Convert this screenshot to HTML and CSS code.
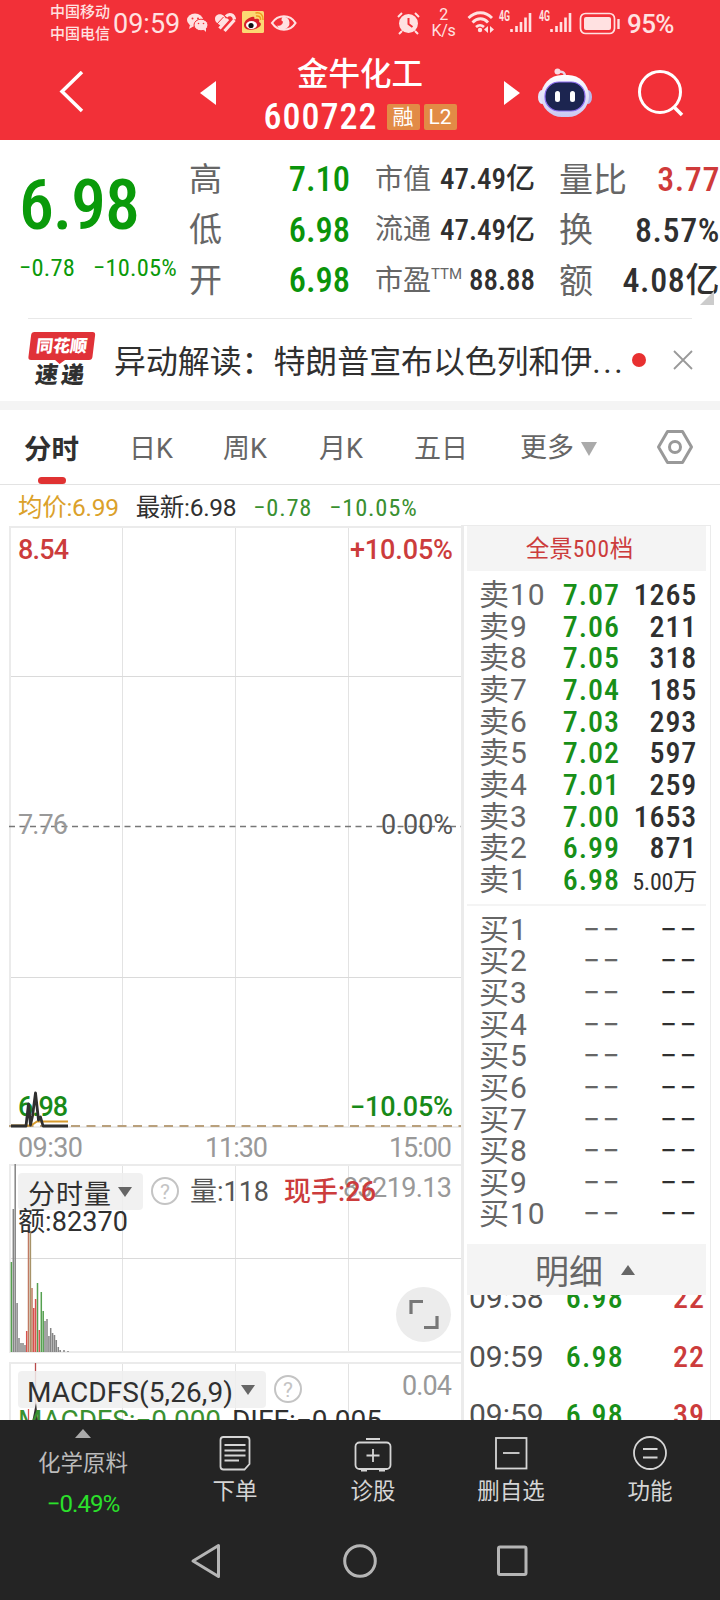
FILE: index.html
```
<!DOCTYPE html>
<html lang="zh-CN">
<head>
    <meta charset="UTF-8">
    <meta name="viewport" content="width=device-width, initial-scale=1.0">
    <title>金牛化工 600722</title>
    <link rel="stylesheet" href="styles.css">
</head>
<body>
    <header class="top">
        <div class="status">
            <div class="carrier"><span>中国移动</span><span>中国电信</span></div>
            <span class="clock">09:59</span>
            <svg class="st-left" width="112" height="26" viewBox="186 9 112 26">
                <g fill="#ffe1e1">
                    <ellipse cx="195" cy="20" rx="8" ry="6.5"/><path d="M190 25l-1 4 5-3z"/>
                    <ellipse cx="201" cy="25" rx="7" ry="5.8" stroke="#f23038" stroke-width="1"/><path d="M203 29l3 3v-4z"/>
                </g>
                <g fill="#f23038"><circle cx="192.500" cy="18.500" r="1"/><circle cx="198" cy="18.500" r="1"/><circle cx="198.500" cy="23.500" r=".8"/><circle cx="203.500" cy="23.500" r=".8"/></g>
                <path d="M215 19c0-5 6-6 9-3l3 4-6 6c-4-3-6-4-6-7z" fill="#ffe1e1"/>
                <path d="M219.500 28.500l8.500-9.500M224.500 31l10-11" fill="none" stroke="#ffe1e1" stroke-width="3.200"/>
                <path d="M226 16.500c3-3.500 8-2 8.500 3" fill="none" stroke="#ffe1e1" stroke-width="3.200"/>
                <path d="M216.500 24.500l7-7.500" stroke="#f23038" stroke-width="1"/>
                <rect x="242" y="11" width="22" height="22" rx="1.500" fill="#fcd873"/>
                <path d="M244 25c0-5 7-9 10-8 1 1 0 2 1 2 3-1 5 0 4 3 3 1 2 4 0 5-5 4-15 4-15-2z" fill="#d8202a"/>
                <ellipse cx="251.500" cy="25" rx="5.500" ry="4" fill="#fff"/><circle cx="251" cy="25.500" r="2.600" fill="#111"/>
                <path d="M256 16c3-.5 5 1 4.500 4M255.500 13c5-1 8 2 7.500 7" fill="none" stroke="#f09a20" stroke-width="1.500"/>
                <path d="M272 23c6-9 18-9 23.500 0-5.500 9-17.500 9-23.500 0z" fill="none" stroke="#ffe1e1" stroke-width="2.200"/>
                <path d="M283 16.500a6.500 6.500 0 1 1-6 9c3 1 6-1 6-4-2 0-2-3 0-5z" fill="#ffe1e1"/>
            </svg>
            <svg class="st-alarm" width="24" height="24" viewBox="397 11 24 24">
                <circle cx="408.500" cy="23.500" r="9.500" fill="#ffe1e1"/>
                <path d="M398 17l4-4M419 17l-4-4M402 31l-3 3M415 31l3 3" stroke="#ffe1e1" stroke-width="2"/>
                <path d="M408.500 18v6l4 3" fill="none" stroke="#f23038" stroke-width="2"/>
            </svg>
            <div class="speed"><span>2</span><span>K/s</span></div>
            <svg class="st-right" width="156" height="26" viewBox="466 9 156 26">
                <g fill="none" stroke="#ffe1e1" stroke-width="2.800">
                    <path d="M468.500 18c7-7 17-7 23.500 0M472.500 22.500c5-5 11-5 15.500 0M476 27c3-2.500 5-2.500 8 0"/>
                </g>
                <circle cx="480" cy="30" r="2.200" fill="#ffe1e1"/>
                <path d="M488 26v7l-4-3.500zM490 26v7l4-3.500z" fill="#ffe1e1"/>
                <text class="net" x="499" y="21" textLength="11" lengthAdjust="spacingAndGlyphs">4G</text>
                <path d="M511.500 29v3M516.500 26v6M521 22v10M525.500 17.500V32M530 13v19M551.500 29v3M556.500 26v6M561 22v10M565.500 17.500V32M570 13v19" stroke="#ffe1e1" stroke-width="2.600"/>
                <text class="net" x="539" y="21" textLength="11" lengthAdjust="spacingAndGlyphs">4G</text>
                <rect x="580.500" y="13.500" width="34" height="20" rx="5" fill="none" stroke="#ffe1e1" stroke-width="1.700"/>
                <rect x="584" y="17" width="27" height="13" rx="2" fill="#ffe1e1"/>
                <path d="M618.500 19v10" stroke="#ffe1e1" stroke-width="2.400"/>
            </svg>
            <span class="battery">95%</span>
        </div>
        <div class="titlebar">
            <svg class="back" width="26" height="44" viewBox="0 0 26 44"><path d="M23 1L3 20.500 23 40" fill="none" stroke="#fff" stroke-width="3.500"/></svg>
            <svg class="prev" width="16" height="24" viewBox="0 0 16 24"><path d="M16 0v24L0 12z" fill="#fff"/></svg>
            <div class="stock">
                <h1>金牛化工</h1>
                <div class="code"><b>600722</b><i>融</i><i>L2</i></div>
            </div>
            <svg class="next" width="16" height="24" viewBox="0 0 16 24"><path d="M0 0v24l16-12z" fill="#fff"/></svg>
            <svg class="robot" width="54" height="50" viewBox="0 0 54 50">
                <defs><linearGradient id="head" x2="0" y2="1"><stop offset="0" stop-color="#fff"/><stop offset="1" stop-color="#c9c8f2"/></linearGradient></defs>
                <path d="M27 9c0-5-3-6-7-5" fill="none" stroke="#e9d3e4" stroke-width="2.500"/><circle cx="19.500" cy="3.500" r="3" fill="#f9dbe3"/>
                <ellipse cx="4" cy="29" rx="4" ry="7" fill="#e6e4fa"/><ellipse cx="50" cy="29" rx="4" ry="7" fill="#b9b8ea"/>
                <rect x="3" y="7" width="48" height="42" rx="21" fill="url(#head)"/>
                <rect x="7" y="14" width="40" height="29" rx="14" fill="#1c2550" stroke="#8c6cf0" stroke-width="1.200"/>
                <rect x="17" y="23" width="5" height="11" rx="2.500" fill="#fff"/><rect x="32" y="23" width="5" height="11" rx="2.500" fill="#fff"/>
            </svg>
            <svg class="search" width="48" height="48" viewBox="0 0 48 48"><circle cx="23" cy="23" r="20.500" fill="none" stroke="#fff" stroke-width="3"/><path d="M37 38l8 8" stroke="#fff" stroke-width="3.500"/></svg>
        </div>
    </header>

    <section class="quote">
        <div class="last">
            <div class="price">6.98</div>
            <div class="change"><span>−0.78</span><span>−10.05%</span></div>
        </div>
        <dl class="col-a">
            <dt>高</dt><dd>7.10</dd>
            <dt>低</dt><dd>6.98</dd>
            <dt>开</dt><dd>6.98</dd>
        </dl>
        <dl class="col-b">
            <dt>市值</dt><dd>47.49<em>亿</em></dd>
            <dt>流通</dt><dd>47.49<em>亿</em></dd>
            <dt>市盈<sup>TTM</sup></dt><dd>88.88</dd>
        </dl>
        <dl class="col-c">
            <dt>量比</dt><dd class="up">3.77</dd>
            <dt>换</dt><dd>8.57%</dd>
            <dt>额</dt><dd>4.08<em>亿</em></dd>
        </dl>
        <i class="corner"></i>
    </section>

    <section class="news">
        <div class="logo"><span class="logo-top">同花顺</span><span class="logo-sub">速递</span></div>
        <p>异动解读：特朗普宣布以色列和伊<span class="dots">...</span></p>
        <i class="dot"></i>
        <svg class="close" width="20" height="20" viewBox="0 0 20 20"><path d="M1 1l18 18M19 1L1 19" stroke="#999" stroke-width="1.800"/></svg>
    </section>

    <nav class="tabs">
        <span class="tab active">分时</span>
        <span class="tab">日K</span>
        <span class="tab">周K</span>
        <span class="tab">月K</span>
        <span class="tab">五日</span>
        <span class="tab more">更多<i class="down"></i></span>
        <svg class="gear" width="38" height="36" viewBox="0 0 38 36"><path d="M11.500 2.500h15L35.500 18l-9 15.500h-15L2.500 18z" fill="none" stroke="#999" stroke-width="3" stroke-linejoin="round"/><circle cx="19" cy="18" r="5.500" fill="none" stroke="#999" stroke-width="3"/></svg>
    </nav>

    <div class="avg">
        <span class="yellow">均价:<b>6.99</b></span>
        <span class="newest">最新:<b>6.98</b></span>
        <span class="green"><b>−0.78</b></span>
        <span class="green"><b>−10.05%</b></span>
    </div>

    <main class="market">
        <svg class="charts" width="462" height="895" viewBox="0 525 462 895">
            <g fill="none" stroke="#e3e3e3" stroke-width="1">
                <path d="M122.500 527v600M235.500 527v600M348.500 527v600M122.500 1165v187M235.500 1165v187M348.500 1165v187M122.500 1363v57M235.500 1363v57M348.500 1363v57"/>
                <path d="M9 676.500h453M9 977.500h453M9 1258.500h453" stroke="#dadada"/>
            </g>
            <g fill="none" stroke="#ebebeb" stroke-width="2">
                <path d="M9 527h453M10 526v601M9 1127h453M9 1165h453M10 1164v189M9 1352h453M9 1363h453M10 1362v58"/>
            </g>
            <path d="M9 826.500h453" stroke="#777" stroke-width="1.300" stroke-dasharray="6 4.500"/>
            <path d="M9 1126h453" stroke="#b9a07c" stroke-width="1.800" stroke-dasharray="9 6.500"/>

            <text class="red" x="18" y="559" textLength="51">8.54</text>
            <text class="red" x="350" y="559" textLength="103">+10.05%</text>
            <text class="gray" x="18" y="834" textLength="50">7.76</text>
            <text class="mid" x="381" y="834" textLength="72">0.00%</text>
            <text class="green" x="18" y="1116" textLength="50">6.98</text>
            <text class="green" x="350" y="1116" textLength="103">−10.05%</text>
            <text class="gray" x="18" y="1157" textLength="65">09:30</text>
            <text class="gray" x="205" y="1157" textLength="63">11:30</text>
            <text class="gray" x="389" y="1157" textLength="63">15:00</text>

            <path d="M11 1125.500h20l6-4h31" fill="none" stroke="#d79b2d" stroke-width="2"/>
            <path d="M11 1126h15l2.500-22 2 21 2-9 3-23 3 27 2-3 2.500 9h25" fill="none" stroke="#2f2f2f" stroke-width="2.800" stroke-linejoin="round"/>

            <!-- volume bars -->
            <g stroke-width="1.500">
                <path d="M13.300 1352v-143M15.200 1352v-188M17.100 1352v-49M19 1352v-14M21 1352v-9M23 1352v-9M25 1352v-7M45 1352v-31M47 1352v-33M48.900 1352v-16M50.700 1352v-24M52.600 1352v-19M54.500 1352v-17M56.300 1352v-12M58.300 1352v-5M60.200 1352v-2M64 1352v-2M68 1352v-1" stroke="#858585"/>
                <path d="M11.400 1352v-90M37.500 1352v-69M41.300 1352v-60M43.200 1352v-41" stroke="#55a050"/>
                <path d="M26.700 1352v-21M33.700 1352v-44M35.600 1352v-53M39.300 1352v-22" stroke="#d8524e"/>
                <path d="M28.500 1352v-126M32 1352v-64" stroke="#c07a62"/>
                <path d="M30.400 1352v-121" stroke="#a79368"/>
            </g>

            <rect x="18" y="1173" width="125" height="37" rx="4" fill="#eee" fill-opacity=".85"/>
            <text class="dark cn" x="28" y="1203.500" textLength="83">分时量</text>
            <path d="M118 1187h14l-7 10z" fill="#666"/>
            <circle cx="165" cy="1191" r="13" fill="none" stroke="#c4c4c4" stroke-width="2"/><text class="help" x="165" y="1198.500">?</text>
            <text class="mid cn" x="190" y="1200.500" textLength="79">量:118</text>
            <text class="gray" x="343" y="1197" textLength="109">83219.13</text>
            <text class="red cn" x="284" y="1200.500" textLength="92">现手:26</text>
            <text class="dark cn" x="18" y="1230.500" textLength="110">额:82370</text>
            <circle cx="423.500" cy="1314.500" r="27.500" fill="#ececec"/>
            <path d="M411 1314v-12.500h12M437 1316v11.500h-13" fill="none" stroke="#777" stroke-width="3.200"/>

            <path d="M35.500 1363v57" stroke="#b84b4b" stroke-width="1.300"/>
            <path d="M28.500 1409v11" stroke="#d8524e" stroke-width="1.300"/>
            <rect x="18" y="1371" width="248" height="37" rx="4" fill="#eee" fill-opacity=".85"/>
            <path d="M32.500 1420l3.500-17 2 17z" fill="#333"/>
            <text class="dark big" x="27" y="1402" textLength="206">MACDFS(5,26,9)</text>
            <path d="M241 1385h14l-7 10z" fill="#666"/>
            <circle cx="288" cy="1389" r="13" fill="none" stroke="#c4c4c4" stroke-width="2"/><text class="help" x="288" y="1396.500">?</text>
            <text class="gray" x="402" y="1395" textLength="50">0.04</text>
            <text class="leaf big" x="18" y="1430" textLength="203">MACDFS:−0.000</text>
            <text class="dark big" x="232" y="1430" textLength="150">DIFF:−0.005</text>
        </svg>

        <aside class="book">
            <div class="depth">全景<b>500</b>档</div>
            <div class="level"><span>卖10</span><b>7.07</b><u>1265</u></div>
            <div class="level"><span>卖9</span><b>7.06</b><u>211</u></div>
            <div class="level"><span>卖8</span><b>7.05</b><u>318</u></div>
            <div class="level"><span>卖7</span><b>7.04</b><u>185</u></div>
            <div class="level"><span>卖6</span><b>7.03</b><u>293</u></div>
            <div class="level"><span>卖5</span><b>7.02</b><u>597</u></div>
            <div class="level"><span>卖4</span><b>7.01</b><u>259</u></div>
            <div class="level"><span>卖3</span><b>7.00</b><u>1653</u></div>
            <div class="level"><span>卖2</span><b>6.99</b><u>871</u></div>
            <div class="level"><span>卖1</span><b>6.98</b><u class="small">5.00万</u></div>
            <hr>
            <div class="level none"><span>买1</span><b>−−</b><u>−−</u></div>
            <div class="level none"><span>买2</span><b>−−</b><u>−−</u></div>
            <div class="level none"><span>买3</span><b>−−</b><u>−−</u></div>
            <div class="level none"><span>买4</span><b>−−</b><u>−−</u></div>
            <div class="level none"><span>买5</span><b>−−</b><u>−−</u></div>
            <div class="level none"><span>买6</span><b>−−</b><u>−−</u></div>
            <div class="level none"><span>买7</span><b>−−</b><u>−−</u></div>
            <div class="level none"><span>买8</span><b>−−</b><u>−−</u></div>
            <div class="level none"><span>买9</span><b>−−</b><u>−−</u></div>
            <div class="level none"><span>买10</span><b>−−</b><u>−−</u></div>
            <div class="detail">明细<i></i></div>
            <div class="trades">
                <div class="trade"><span>09:58</span><b>6.98</b><u>22</u></div>
                <div class="trade"><span>09:59</span><b>6.98</b><u>22</u></div>
                <div class="trade"><span>09:59</span><b>6.98</b><u>39</u></div>
            </div>
        </aside>
    </main>

    <footer class="bottom">
        <div class="actions">
            <div class="sector"><i></i><span>化学原料</span><b>−0.49%</b></div>
            <div class="action">
                <svg width="38" height="38" viewBox="0 0 38 38"><path d="M7.500 3h23q3 0 3 3v24l-5 5.500h-21q-3 0-3-3V6q0-3 3-3zM8.500 11h21M8.500 16.500h21M8.500 21.500h21M8.500 26.500H23"/></svg>
                <span>下单</span>
            </div>
            <div class="action">
                <svg width="38" height="38" viewBox="0 0 38 38"><rect x="1.500" y="8.500" width="35" height="26.500" rx="4"/><path d="M12 5h14M19 15v13M12.500 21.500h13M7 36.500h6M25 36.500h6"/></svg>
                <span>诊股</span>
            </div>
            <div class="action">
                <svg width="38" height="38" viewBox="0 0 38 38"><rect x="4" y="4" width="30.500" height="30.500"/><path d="M11 19h16.500"/></svg>
                <span>删自选</span>
            </div>
            <div class="action">
                <svg width="38" height="38" viewBox="0 0 38 38"><circle cx="19" cy="19" r="16"/><path d="M12 15h14.500M12 23.500h14.500"/></svg>
                <span>功能</span>
            </div>
        </div>
        <div class="sysnav">
            <svg width="32" height="38" viewBox="0 0 32 38"><path d="M28.500 3.500v31L3 19z"/></svg>
            <svg width="36" height="38" viewBox="0 0 36 38"><circle cx="18" cy="19" r="15.300"/></svg>
            <svg width="32" height="38" viewBox="0 0 32 38"><rect x="2.500" y="5" width="27.500" height="27.500" rx="1.500"/></svg>
        </div>
    </footer>
</body>
</html>
```
FILE: styles.css
```
* {
    box-sizing: border-box;
}
body {
    margin: 0;
    width: 720px;
    height: 1600px;
    overflow: hidden;
    background: #fff;
    color: #303030;
    font-family: Roboto, "Noto Sans CJK SC", sans-serif;
    font-stretch: condensed;
}
svg {
    display: block;
    flex: none;
}
b, i, u, em {
    font-style: normal;
    text-decoration: none;
    font-weight: inherit;
}
.top {
    height: 140px;
    background: #f23038;
    color: #fff;
}
.status {
    display: flex;
    align-items: center;
    height: 46px;
    padding-left: 50px;
    color: #ffe1e1;
    font-stretch: normal;
}
.carrier {
    display: flex;
    flex-direction: column;
    width: 63px;
    font-size: 15px;
    font-weight: 500;
    line-height: 22px;
    white-space: nowrap;
}
.clock {
    width: 73px;
    padding-top: 2px;
    font-size: 27px;
}
.st-left {
    margin-top: -2px;
}
.st-alarm {
    margin-left: 99px;
}
.speed {
    display: flex;
    flex-direction: column;
    align-items: center;
    width: 45px;
    font-size: 16px;
    line-height: 16px;
    letter-spacing: -0.3px;
}
.st-right {
    margin-top: -2px;
}
.net {
    font-size: 14px;
    font-weight: 700;
    fill: #ffe1e1;
}
.battery {
    margin-left: 5px;
    padding-top: 2px;
    font-size: 26px;
    font-weight: 500;
    letter-spacing: -0.6px;
}
.titlebar {
    display: flex;
    align-items: center;
    height: 94px;
    padding-left: 59px;
}
.prev {
    margin-left: 115px;
}
.stock {
    width: 288px;
    padding-top: 6px;
    text-align: center;
}
.stock h1 {
    margin: 0;
    font-size: 31.500px;
    font-weight: 500;
    line-height: 42px;
}
.code {
    display: flex;
    align-items: center;
    justify-content: center;
    height: 42px;
    gap: 4px;
}
.code b {
    margin-right: 5px;
    font-size: 36px;
    font-weight: 500;
    letter-spacing: 1px;
}
.code i {
    width: 33px;
    height: 26px;
    background: #e28b46;
    border-radius: 2px;
    font-size: 21px;
    line-height: 26px;
}
.code i:last-child {
    font-stretch: normal;
}
.robot {
    margin-left: 18px;
}
.search {
    margin-left: 45px;
}
.quote {
    position: relative;
    display: flex;
    height: 179px;
    padding-top: 14px;
}
.quote::after {
    content: "";
    position: absolute;
    left: 28px;
    right: 28px;
    bottom: 0;
    border-bottom: 1px solid #e8e8e8;
}
.last {
    width: 189px;
    padding-left: 19px;
    color: #0a9a0a;
}
.price {
    height: 100px;
    font-size: 70px;
    font-weight: 500;
    line-height: 102px;
    letter-spacing: -1.200px;
}
.change {
    display: flex;
    gap: 18px;
    font-size: 24.500px;
    line-height: 28px;
    letter-spacing: 0.200px;
    white-space: nowrap;
}
dl {
    display: grid;
    grid-auto-rows: 50.500px;
    align-items: center;
    align-content: start;
    margin: 0;
    line-height: 50px;
    white-space: nowrap;
}
dt {
    padding-top: 1px;
    color: #666;
}
dd {
    margin: 0;
    text-align: right;
    font-weight: 500;
}
.col-a {
    grid-template-columns: 34px 127px;
    font-size: 33px;
}
.col-a dd {
    color: #0a940a;
    font-size: 34.500px;
}
.col-b {
    grid-template-columns: 57px 103px;
    margin-left: 25px;
    font-size: 28px;
}
.col-b dd {
    font-size: 29px;
}
.col-b sup {
    font-size: 15px;
    font-stretch: normal;
    line-height: 0;
    vertical-align: 11px;
}
.col-c {
    grid-template-columns: 60px 101px;
    margin-left: 24px;
    font-size: 34px;
}
.col-c dd {
    letter-spacing: 0.600px;
}
.col-c .up {
    color: #cf3a3a;
}
.corner {
    position: absolute;
    left: 700px;
    top: 151px;
    border-left: 14px solid transparent;
    border-bottom: 14px solid #ccc;
}
.news {
    display: flex;
    align-items: center;
    height: 91px;
    padding-left: 28px;
    border-bottom: 9px solid #f4f4f4;
}
.logo {
    display: flex;
    flex-direction: column;
    width: 86px;
    height: 57px;
    transform: skewX(-7deg);
    font-weight: 900;
}
.logo-top {
    position: relative;
    width: 64px;
    height: 28px;
    background: #e03238;
    border-radius: 3px;
    color: #fff;
    font-size: 17px;
    line-height: 28px;
    text-align: center;
}
.logo-top::after {
    content: "";
    position: absolute;
    left: 27px;
    top: 28px;
    border: 5px solid transparent;
    border-top: 4px solid #e03238;
    border-bottom: 0;
}
.logo-sub {
    margin-left: 9px;
    font-size: 23px;
    line-height: 32px;
    letter-spacing: 3px;
}
.news p {
    width: 511px;
    margin: 0;
    padding-top: 3px;
    font-size: 31.900px;
    line-height: 60px;
    white-space: nowrap;
}
.dots {
    letter-spacing: 2.500px;
}
.dot {
    width: 14px;
    height: 14px;
    margin-left: 7px;
    border-radius: 50%;
    background: #e83030;
}
.close {
    margin-left: 27px;
}
.tabs {
    display: grid;
    grid-template-columns: 105px 94px 96px 95px 106px 137px 38px;
    align-items: center;
    height: 75px;
    padding-left: 24px;
    border-bottom: 1px solid #e3e3e3;
    color: #666;
    font-size: 27px;
    font-stretch: normal;
}
.tab {
    position: relative;
    height: 74px;
    line-height: 79px;
}
.active {
    color: #303030;
    font-size: 27.500px;
    font-weight: 700;
}
.active::after {
    content: "";
    position: absolute;
    left: 14px;
    bottom: 0;
    width: 28px;
    height: 7px;
    border-radius: 4px;
    background: #e03232;
}
.more {
    display: flex;
    align-items: center;
    gap: 7px;
    padding-top: 3px;
}
.down {
    border: 8px solid transparent;
    border-top: 14px solid #aaa;
    border-bottom: 0;
}
.gear {
    margin: -1px 0 0 -1px;
}
.avg {
    display: flex;
    height: 40px;
    padding-left: 18px;
    gap: 17px;
    font-size: 24.500px;
    line-height: 46px;
    white-space: nowrap;
    font-stretch: normal;
    letter-spacing: -0.300px;
}
.yellow {
    color: #dba12a;
}
.green {
    color: #3a9030;
    fill: #188a18;
}
.avg .green {
    font-stretch: condensed;
    letter-spacing: 0.800px;
}
.market {
    display: flex;
    height: 895px;
    overflow: hidden;
}
.charts text {
    font-size: 27px;
    font-stretch: normal;
}
.charts .big {
    font-size: 28px;
}
.charts .help {
    font-size: 21px;
    fill: #c4c4c4;
    text-anchor: middle;
}
.charts .red, .charts .green {
    font-weight: 500;
}
.red { fill: #cc3c3c; }
.gray { fill: #999; }
.mid { fill: #555; }
.dark { fill: #303030; }
.leaf { fill: #3a9030; }
.book {
    width: 250px;
    height: 895px;
    padding: 0 4px 0 3px;
    border: 1px solid #ebebeb;
    border-left-width: 3px;
    border-bottom: 0;
    margin-left: -1px;
}
.depth {
    height: 45px;
    margin-bottom: 8px;
    background: #f4f4f4;
    color: #cc3c3c;
    font-size: 23.500px;
    line-height: 47px;
    text-align: center;
    padding-right: 14px;
}
.depth b {
    letter-spacing: 0.800px;
}
.level {
    display: grid;
    grid-template-columns: 72px 69px 77px;
    padding-left: 12px;
    height: 31.670px;
    line-height: 32.500px;
    font-size: 30px;
    white-space: nowrap;
}
.level span {
    color: #666;
    font-stretch: normal;
    letter-spacing: 1px;
}
.level b {
    color: #188f18;
    font-weight: 500;
    text-align: right;
    letter-spacing: 1px;
}
.level u {
    font-weight: 500;
    text-align: right;
    letter-spacing: 0.800px;
}
.level .small {
    padding-top: 2px;
    font-size: 24px;
    font-weight: 400;
    letter-spacing: -0.200px;
}
.none b, .none u {
    font-weight: 400;
    font-stretch: normal;
    letter-spacing: 2.500px;
    margin-right: -2px;
}
.none b {
    color: #666;
}
.book hr {
    height: 2px;
    margin: 8px 0 8px;
    border: 0;
    background: #f4f4f4;
}
.detail {
    display: flex;
    align-items: center;
    height: 51px;
    margin-top: 14px;
    padding-left: 68px;
    gap: 18px;
    background: #f4f4f4;
    color: #666;
    font-size: 34px;
}
.detail i {
    border: 7px solid transparent;
    border-bottom: 10px solid #666;
    border-top: 0;
}
.trades {
    height: 125px;
    overflow: hidden;
}
.trade {
    display: grid;
    grid-template-columns: 84px 71px 81px;
    height: 58.500px;
    padding-left: 2px;
    font-size: 30px;
    line-height: 58.500px;
}
.trade:first-child {
    margin-top: -26px;
}
.trade span {
    color: #505050;
    font-stretch: normal;
}
.trade b {
    color: #188f18;
    font-weight: 500;
    text-align: right;
    letter-spacing: 1.200px;
}
.trade u {
    color: #cc3c3c;
    font-weight: 500;
    text-align: right;
    letter-spacing: 1px;
}
.bottom {
    height: 180px;
    background: #242424;
    color: #d5d5d5;
}
.actions {
    display: grid;
    grid-template-columns: 166px 138px 138px 138px 140px;
    height: 102px;
    font-size: 22.500px;
}
.actions svg {
    fill: none;
    stroke: #d5d5d5;
    stroke-width: 1.800;
}
.action {
    display: flex;
    flex-direction: column;
    align-items: center;
    padding-top: 14px;
    line-height: 39px;
}
.sector {
    display: flex;
    flex-direction: column;
    align-items: center;
    padding-top: 9px;
    color: #bbb;
    line-height: 41px;
}
.sector i {
    margin-bottom: 5px;
    border: 8px solid transparent;
    border-bottom: 9px solid #aaa;
    border-top: 0;
}
.sector b {
    color: #2be02b;
    font-size: 24px;
    font-stretch: normal;
    letter-spacing: -0.900px;
}
.sysnav {
    display: grid;
    grid-template-columns: 152px 154px 32px;
    align-items: center;
    padding: 20px 0 0 190px;
}
.sysnav svg {
    fill: none;
    stroke: #b5b5b5;
    stroke-width: 3;
    stroke-linejoin: round;
}
```
